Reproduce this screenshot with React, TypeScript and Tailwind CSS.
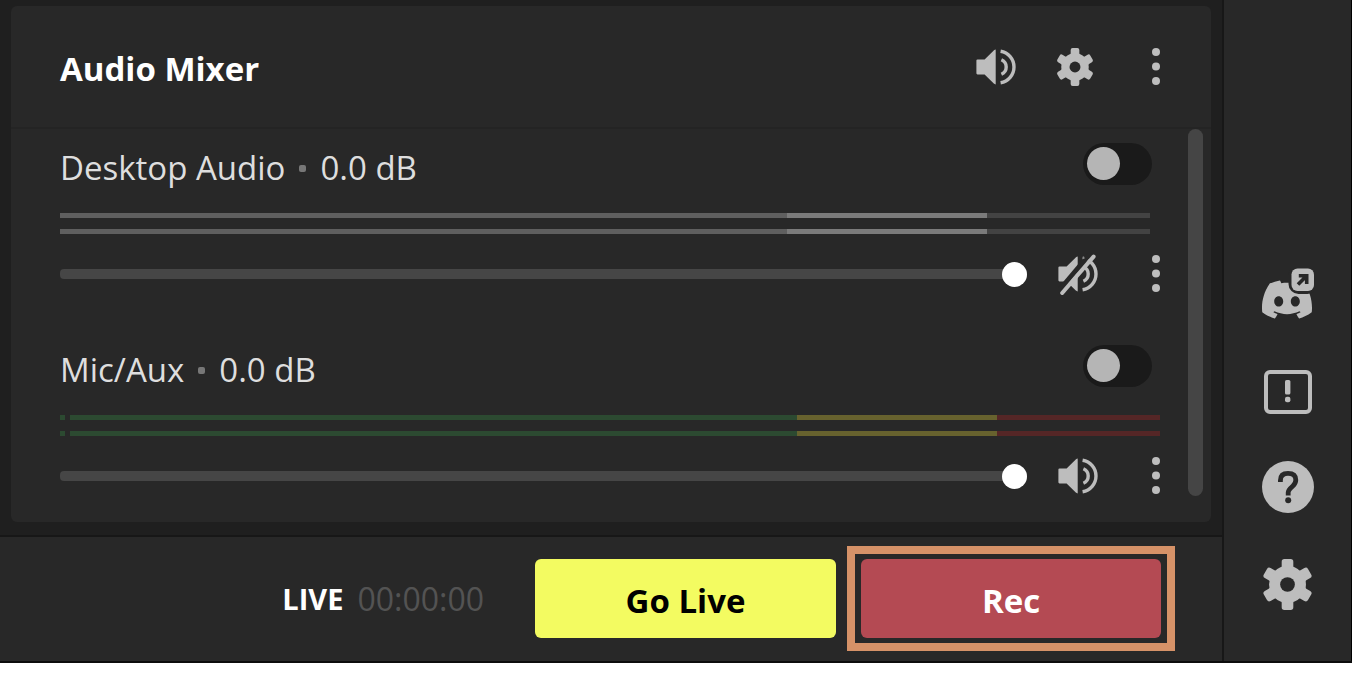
import { useState } from "react";
import { SiDiscord } from "react-icons/si";

function SpeakerIcon({ muted = false }: { muted?: boolean }) {
  return (
    <svg viewBox="0 0 40 42" className="block h-[42px] w-10" fill="none" aria-hidden="true">
      <path
        d="M1.5 13.5H8.6L18 4.2Q18.8 3.6 19.7 3.6V38.4Q18.6 38.4 17.8 37.6L8.6 28.4H1.5Q0.4 28.4 0.4 27.3V14.6Q0.4 13.5 1.5 13.5Z"
        fill="#bdbdbd"
      />
      <path d="M24.6 5.3A15.9 15.9 0 0 1 24.6 36.7" stroke="#bdbdbd" strokeWidth="3.4" />
      <path d="M25.4 13.8A7.8 7.8 0 0 1 25.4 28.2" stroke="#bdbdbd" strokeWidth="3.4" />
      {muted && (
        <>
          <path d="M0 39L32.8 0" stroke="#282828" strokeWidth="5" />
          <path d="M4.2 40L35.6 3.6" stroke="#bdbdbd" strokeWidth="4" strokeLinecap="round" />
          <circle cx="25.6" cy="5" r="1" fill="#8a8a8a" />
        </>
      )}
    </svg>
  );
}

const TEETH = [0, 60, 120, 180, 240, 300];

function GearIcon({ className }: { className: string }) {
  return (
    <svg viewBox="0 0 48 50" className={className} aria-hidden="true">
      <g fill="#bdbdbd">
        {TEETH.map((angle) => (
          <path
            key={angle}
            transform={`rotate(${angle} 24 25)`}
            d="M15.5 14Q18.3 10 18.3 7V2.6Q18.3 0 20.9 0H27.1Q29.7 0 29.7 2.6V7Q29.7 10 32.5 14L24 25Z"
          />
        ))}
      </g>
      <circle cx="24" cy="25" r="12.6" fill="none" stroke="#bdbdbd" strokeWidth="11" />
      <circle cx="24" cy="25" r="7.2" fill="#282828" />
    </svg>
  );
}

function DotsButton({ label }: { label: string }) {
  return (
    <button type="button" aria-label={label} className="w-2 shrink-0">
      <svg viewBox="0 0 8 38" className="block h-[38px] w-2" fill="#bdbdbd" aria-hidden="true">
        <circle cx="4" cy="4" r="4" />
        <circle cx="4" cy="18.5" r="4" />
        <circle cx="4" cy="33" r="4" />
      </svg>
    </button>
  );
}

function DesktopMeter() {
  return (
    <div className="mr-2.5 grid h-[5px] grid-cols-[727fr_200fr_163fr]">
      <span className="bg-[#5f5f5f]" />
      <span className="bg-[#7b7b7b]" />
      <span className="bg-[#434343]" />
    </div>
  );
}

function MicMeter() {
  return (
    <div className="grid h-[5px] grid-cols-[5px_5px_727fr_200fr_163fr]">
      <span className="bg-[#2c4a31]" />
      <span />
      <span className="bg-[#2c4a31]" />
      <span className="bg-[#67622e]" />
      <span className="bg-[#552626]" />
    </div>
  );
}

function Channel({ name, mutedAtStart, meter }: { name: string; mutedAtStart: boolean; meter: "desktop" | "mic" }) {
  const [muted, setMuted] = useState(mutedAtStart);
  const [volume, setVolume] = useState(100);
  const Meter = meter === "desktop" ? DesktopMeter : MicMeter;
  return (
    <section>
      <div className="flex items-start justify-between">
        <h2 className="flex items-center text-[33px] leading-[50px] font-normal text-[#dedede]">
          {name}
          <span className="mx-3.5 size-[7px] rounded-xs bg-[#777777]" />
          0.0 dB
        </h2>
        <input
          type="checkbox"
          role="switch"
          aria-label={`Monitor ${name}`}
          className="mr-2 h-[42px] w-[69px] appearance-none rounded-full bg-[#1a1a1a] p-1 before:block before:size-[33px] before:rounded-full before:bg-[#b5b5b5] checked:before:ml-7"
        />
      </div>
      <div className="mt-5 flex flex-col gap-[11px]">
        <Meter />
        <Meter />
      </div>
      <div className="mt-5 flex h-10 items-center">
        <input
          type="range"
          aria-label={`${name} volume`}
          value={volume}
          onChange={(e) => setVolume(Number(e.target.value))}
          className="h-[25px] min-w-0 flex-1 appearance-none bg-transparent [&::-webkit-slider-runnable-track]:h-2.5 [&::-webkit-slider-runnable-track]:rounded [&::-webkit-slider-runnable-track]:bg-[#464646] [&::-webkit-slider-thumb]:-mt-[7px] [&::-webkit-slider-thumb]:size-[25px] [&::-webkit-slider-thumb]:appearance-none [&::-webkit-slider-thumb]:rounded-full [&::-webkit-slider-thumb]:bg-white"
        />
        <button
          type="button"
          aria-label={`Mute ${name}`}
          aria-pressed={muted}
          onClick={() => setMuted(!muted)}
          className="mr-[54px] ml-[31px]"
        >
          <SpeakerIcon muted={muted} />
        </button>
        <DotsButton label={`${name} options`} />
      </div>
    </section>
  );
}

function Sidebar() {
  return (
    <nav className="flex w-[130px] shrink-0 flex-col items-center justify-end border-r border-l-2 border-r-black border-l-[#171717] bg-[#282828] pb-[51px]">
      <button type="button" aria-label="Discord">
        <svg viewBox="0 0 52 52" className="block size-[52px]" aria-hidden="true">
          <SiDiscord x="0" y="6.5" size={50} color="#bdbdbd" />
          <rect x="26.5" y="-3" width="29" height="29" rx="10" fill="#282828" />
          <rect x="29.5" y="0.5" width="22.5" height="22.5" rx="6" fill="#bdbdbd" />
          <path d="M36 16.5L44.5 8M36.8 7.8H44.7V16" fill="none" stroke="#282828" strokeWidth="3.6" />
        </svg>
      </button>
      <button type="button" aria-label="Alerts" className="mt-[50px]">
        <svg viewBox="0 0 48 44" className="block h-11 w-12" aria-hidden="true">
          <rect x="2" y="2" width="44" height="40" rx="4" fill="none" stroke="#bdbdbd" strokeWidth="4" />
          <rect x="21" y="10" width="5.4" height="14.5" rx="1.6" fill="#bdbdbd" />
          <rect x="21" y="26.8" width="5.4" height="5.4" rx="2" fill="#bdbdbd" />
        </svg>
      </button>
      <button type="button" aria-label="Help" className="mt-[47px]">
        <svg viewBox="0 0 52 52" className="block size-[52px]" fill="none" aria-hidden="true">
          <circle cx="26" cy="26" r="26" fill="#bdbdbd" />
          <path
            d="M18.4 21V19.4Q18.4 12.4 26 12.4Q33.8 12.4 33.8 19Q33.8 22.4 30.6 25.2Q26.2 29 26.2 31.4V34.6"
            stroke="#282828"
            strokeWidth="4.8"
          />
          <circle cx="26.2" cy="39.2" r="3" fill="#282828" />
        </svg>
      </button>
      <button type="button" aria-label="Settings" className="mt-[46px]">
        <GearIcon className="block h-[51px] w-[49px]" />
      </button>
    </nav>
  );
}

export default function App() {
  return (
    <div className="bg-white pr-3 font-['Open_Sans','Noto_Sans',sans-serif]">
      <div className="flex border-b-2 border-[#0c0c0c] bg-[#1f1f1f]">
        <main className="min-w-0 flex-1">
          <div className="mx-[11px] mt-1.5 mb-[13px] rounded-md bg-[#282828]">
            <header className="flex h-[123px] items-center border-b-2 border-[#242424] pr-[51px] pl-[49px]">
              <h1 className="flex-1 pt-1 text-[33px] leading-[46px] font-bold text-white">Audio Mixer</h1>
              <button type="button" aria-label="Mute all">
                <SpeakerIcon />
              </button>
              <button type="button" aria-label="Mixer settings" className="mr-[58px] ml-10">
                <GearIcon className="block h-[38px] w-[38px]" />
              </button>
              <DotsButton label="Mixer options" />
            </header>
            <div className="flex pb-[26px]">
              <div className="flex min-w-0 flex-1 flex-col gap-[51px] pt-3.5 pr-7 pl-[49px]">
                <Channel name="Desktop Audio" mutedAtStart meter="desktop" />
                <Channel name="Mic/Aux" mutedAtStart={false} meter="mic" />
              </div>
              <div className="mr-2 w-[15px] rounded-full bg-[#454545]" />
            </div>
          </div>
          <footer className="flex items-center justify-end border-t-2 border-[#171717] bg-[#282828] pt-[9px] pr-[47px] pb-2.5">
            <span className="text-[29px] font-bold text-white">LIVE</span>
            <time className="mr-[51px] ml-3.5 text-[32px] font-normal text-[#535353]">00:00:00</time>
            <button
              type="button"
              className="mr-[11px] h-[79px] w-[301px] rounded-md bg-[#f3fb61] pt-1 text-[33px] font-bold text-black"
            >
              Go Live
            </button>
            <div className="border-8 border-[#d69268] px-1.5 py-[5px]">
              <button
                type="button"
                className="block h-[79px] w-[300px] rounded-md bg-[#b44a53] pt-1 text-[33px] font-bold text-white"
              >
                Rec
              </button>
            </div>
          </footer>
        </main>
        <Sidebar />
      </div>
    </div>
  );
}
